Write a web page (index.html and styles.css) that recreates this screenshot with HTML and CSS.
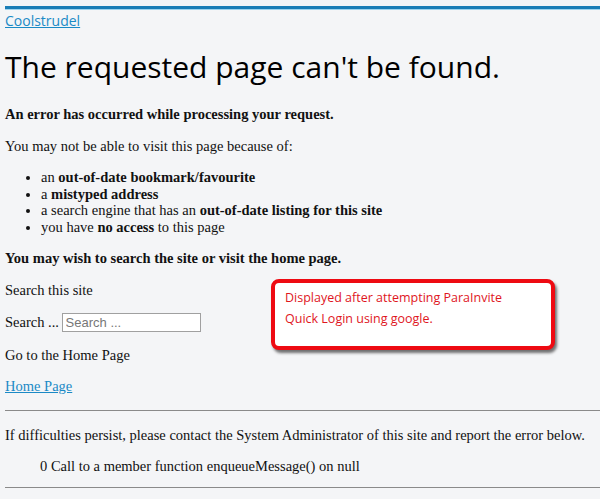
FILE: index.html
```html
<!DOCTYPE html>
<html lang="en">
  <head>
    <meta charset="UTF-8" />
    <meta name="viewport" content="width=device-width, initial-scale=1.0" />
    <title>404 - Coolstrudel</title>
    <link rel="stylesheet" href="styles.css">
  </head>
  <body>
    <div class="page">
      <div class="top-bar"></div>
      <a class="site-name" href="#">Coolstrudel</a>
      <h1>The requested page can't be found.</h1>
      <p><strong>An error has occurred while processing your request.</strong></p>
      <p>You may not be able to visit this page because of:</p>
      <ul class="reasons">
        <li>an <strong>out-of-date bookmark/favourite</strong></li>
        <li>a <strong>mistyped address</strong></li>
        <li>a search engine that has an <strong>out-of-date listing for this site</strong></li>
        <li>you have <strong>no access</strong> to this page</li>
      </ul>
      <p><strong>You may wish to search the site or visit the home page.</strong></p>
      <p>Search this site</p>
      <p class="search-row">
        <label for="searchword">Search ...</label>
        <input type="text" id="searchword" placeholder="Search ..." />
      </p>
      <p>Go to the Home Page</p>
      <p><a class="home-link" href="#">Home Page</a></p>
      <hr />
      <p>If difficulties persist, please contact the System Administrator of this site and report the error below.</p>
      <p class="error-msg">0 Call to a member function enqueueMessage() on null</p>
      <hr class="last" />

      <div class="callout">Displayed after attempting ParaInvite Quick Login using google.</div>
    </div>
  </body>
</html>
```

FILE: styles.css
```css
body {
  margin: 0;
  background-color: #f4f5f7;
  font-family: "Liberation Serif", "Times New Roman", serif;
  font-size: 14.5px;
  line-height: 17px;
  color: #111;
}
.page {
  position: relative;
  margin: 6px 0 0 5px;
}
.top-bar {
  height: 3px;
  background-color: #1a7db6;
  border-bottom: 1px solid #9fd4ee;
}
.site-name {
  display: inline-block;
  margin-top: 1px;
  font-family: "Open Sans", sans-serif;
  font-size: 14px;
  line-height: 19px;
  color: #1b8ac6;
}
h1 {
  margin: 19px 0 21px;
  font-family: "Open Sans", sans-serif;
  font-size: 30px;
  font-weight: normal;
  line-height: 36px;
  color: #000;
}
p {
  margin: 14.5px 0;
}
.reasons {
  margin: 14.5px 0;
  padding-left: 36px;
  line-height: 16.7px;
}
.search-row input {
  width: 131px;
  height: 15px;
  margin-left: -1px;
  padding: 1px 3px;
  border: 1px solid #a0a0a0;
  font-family: Arial, "Liberation Sans", sans-serif;
  font-size: 13px;
  background-color: #fff;
}
.search-row input::placeholder {
  color: #777;
}
.home-link {
  color: #1b8ac6;
}
hr {
  margin: 14px 0 16px;
  border: 0;
  border-top: 1px solid #8a8a8a;
}
.error-msg {
  padding-left: 35px;
  margin-bottom: 12px;
}
hr.last {
  margin-top: 12px;
}
.callout {
  position: absolute;
  left: 266px;
  top: 273px;
  width: 236px;
  height: 53px;
  padding: 4px 30px 6px 10px;
  border: 4px solid #ee0a12;
  border-radius: 8px;
  background-color: #fff;
  box-shadow: 2px 3px 3px rgba(0, 0, 0, 0.55);
  font-family: "Segoe UI", "Open Sans", sans-serif;
  font-size: 12.5px;
  line-height: 21px;
  color: #e0161e;
}
```
